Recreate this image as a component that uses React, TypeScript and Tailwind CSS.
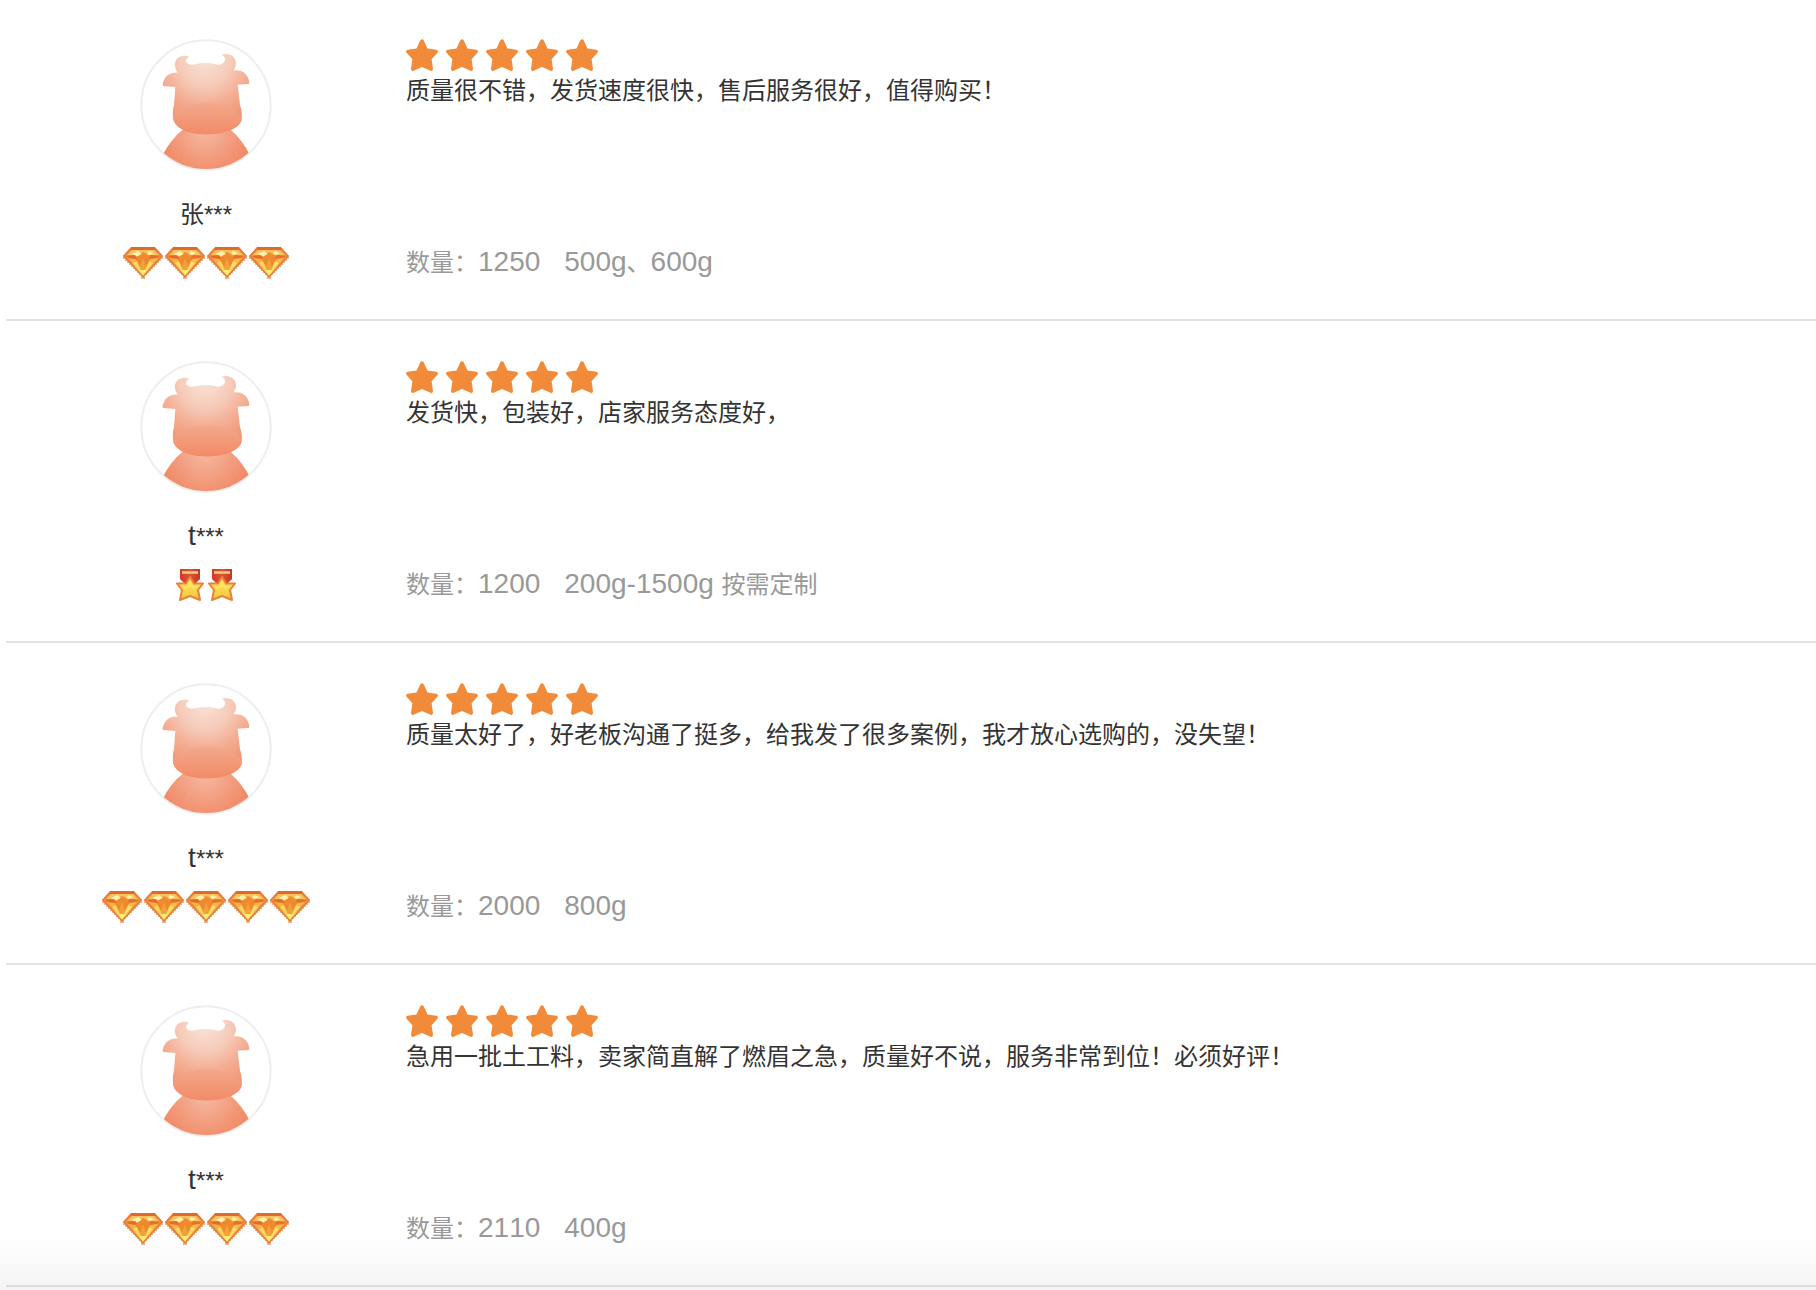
import { Fragment } from "react"

type Badge = "diamond" | "medal"

interface Review {
  name: string
  badge: Badge
  level: number
  content: string
  count: string
  spec: string
}

const reviews: Review[] = [
  {
    name: "张***",
    badge: "diamond",
    level: 4,
    content: "质量很不错，发货速度很快，售后服务很好，值得购买！",
    count: "1250",
    spec: "500g、600g",
  },
  {
    name: "t***",
    badge: "medal",
    level: 2,
    content: "发货快，包装好，店家服务态度好，",
    count: "1200",
    spec: "200g-1500g 按需定制",
  },
  {
    name: "t***",
    badge: "diamond",
    level: 5,
    content: "质量太好了，好老板沟通了挺多，给我发了很多案例，我才放心选购的，没失望！",
    count: "2000",
    spec: "800g",
  },
  {
    name: "t***",
    badge: "diamond",
    level: 4,
    content: "急用一批土工料，卖家简直解了燃眉之急，质量好不说，服务非常到位！必须好评！",
    count: "2110",
    spec: "400g",
  },
]

const Defs = () => (
  <svg className="absolute h-0 w-0" aria-hidden="true">
    <defs>
      <radialGradient id="head" gradientUnits="userSpaceOnUse" cx="225" cy="90" r="220">
        <stop offset="0" stopColor="#f9e2d8" />
        <stop offset="0.35" stopColor="#f6cbb9" />
        <stop offset="0.6" stopColor="#f4ae94" />
        <stop offset="1" stopColor="#f18a66" />
      </radialGradient>
      <linearGradient id="muzzle" x1="0" y1="0" x2="0" y2="1">
        <stop offset="0" stopColor="#f2a88b" />
        <stop offset="1" stopColor="#f28b67" />
      </linearGradient>
      <radialGradient id="body" gradientUnits="userSpaceOnUse" cx="225" cy="300" r="140">
        <stop offset="0" stopColor="#f5b9a2" />
        <stop offset="1" stopColor="#f18a66" />
      </radialGradient>
      <clipPath id="round">
        <circle cx="228" cy="225" r="192" />
      </clipPath>
      <linearGradient id="gem" x1="0" y1="0" x2="0" y2="1">
        <stop offset="0" stopColor="#ee8b32" />
        <stop offset="0.5" stopColor="#f2a03a" />
        <stop offset="1" stopColor="#fbe06a" />
      </linearGradient>
      <linearGradient id="ribbon" x1="0" y1="0" x2="1" y2="0">
        <stop offset="0" stopColor="#cb3a2c" />
        <stop offset="0.5" stopColor="#df5434" />
        <stop offset="1" stopColor="#c5352a" />
      </linearGradient>
      <linearGradient id="gold" x1="0" y1="0" x2="0" y2="1">
        <stop offset="0" stopColor="#fbe55a" />
        <stop offset="1" stopColor="#f8c842" />
      </linearGradient>
    </defs>
  </svg>
)

const Avatar = () => (
  <svg viewBox="30 27 396 396" className="h-[132px] w-[132px]" role="img" aria-label="avatar">
    <circle cx="228" cy="225" r="194" fill="#fff" stroke="#eee" strokeWidth="6" />
    <g clipPath="url(#round)">
      <path d="M158 299C132 320 112 346 98 376V425H360V376C346 346 326 320 302 299Z" fill="url(#body)" />
      <path d="M168 352Q156 370 148 398M303 352Q312 370 318 394" fill="none" stroke="#ee8866" strokeWidth="2" opacity="0.6" />
    </g>
    <path
      d="M143 128C127 105 135 82 158 78Q172 76 178 81C165 85 163 102 184 104C198 104 203 99 228 99C253 99 257 105 270 104C287 99 292 82 275 75C296 66 318 79 318 101Q318 112 311 121C338 118 355 133 358 158Q358 162 354 162L323 164L330 225Q337 242 335 267C333 294 282 313 230 313C176 313 132 294 129 264Q127 240 132 225L136 171L101 168Q97 168 98 163C103 138 120 126 143 128Z"
      fill="url(#head)"
    />
    <path
      d="M129 258C139 234 179 220 230 220C281 220 321 234 335 264C333 296 282 313 230 313C176 313 131 296 129 258Z"
      fill="url(#muzzle)"
    />
  </svg>
)

const Star = () => (
  <svg viewBox="0 0 32 32" className="h-8 w-8" aria-hidden="true">
    <path
      d="M14.300 1.300Q16 -1 17.700 1.300L21.500 9.400L30.200 10.700Q33 11.400 31.400 13.700L25.600 20.200L27 29.800Q27 32.500 24.500 31.700L16 28L7.500 31.700Q5 32.500 5 29.800L6.400 20.200L0.600 13.700Q-1 11.400 1.800 10.700L10.500 9.400Z"
      fill="#f18b39"
    />
  </svg>
)

const Diamond = () => (
  <svg viewBox="0 0 40 32" className="h-8 w-10" aria-hidden="true">
    <path d="M8 0H32V2H34V4H36V6H38V8H40V12H38V14H36V16H34V18H32V20H30V22H28V24H26V26H24V28H22V32H18V28H16V26H14V24H12V22H10V20H8V18H6V16H4V14H2V12H0V8H2V6H4V4H6V2H8Z" fill="#efb48c" />
    <path d="M8 1H32L39 9L20 30L1 9Z" fill="url(#gem)" stroke="#e3793c" strokeWidth="1.4" />
    <path d="M8 0H32V3H8Z" fill="#df6a2c" />
    <path d="M9 3H31L36 8H27L20 5L13 8H4Z" fill="#f8cb6c" opacity="0.85" />
    <path d="M15 4L19 7L13 10L9 7Z" fill="#fdf2ad" />
    <path d="M26 4L31 6L27 8L24 7Z" fill="#fff3a9" />
    <path d="M3 9L12 8L16 12L15 17Z" fill="#e65f23" opacity="0.85" />
    <path d="M37 9L28 8L24 12L25 17Z" fill="#e8672a" opacity="0.85" />
    <path d="M5 11L13 12L19 25Z" fill="#f5b246" />
    <path d="M35 11L27 12L21 25Z" fill="#f7bd49" />
    <path d="M20 6L27 11L23 20H17L13 11Z" fill="#ee8a2d" />
    <path d="M20 11L23 20L20 27L17 20Z" fill="#f0a13a" />
    <path d="M14 14L18 25L10 16Z" fill="#fce06b" opacity="0.8" />
    <path d="M26 14L22 25L30 16Z" fill="#ffe676" opacity="0.8" />
    <path d="M16 23H24L20 28Z" fill="#ffed75" />
  </svg>
)

const Medal = () => (
  <svg viewBox="0 0 28 32" className="h-8 w-7" aria-hidden="true">
    <path d="M4 0H24V10L20 14H8L4 10Z" fill="url(#ribbon)" />
    <path d="M6 2H22V5H6Z" fill="#f3ac5c" />
    <path d="M6 3H22V4H6Z" fill="#f9cf79" />
    <path
      d="M14 8L18 14.500H27L22 21L24 31L14 27L4 31L6 21L1 14.500H10Z"
      fill="url(#gold)"
      stroke="#e98235"
      strokeWidth="2"
      strokeLinejoin="round"
    />
    <path d="M14 11L16 17H22L18 20L14 18L8 21L7 17H12Z" fill="#fdea62" opacity="0.7" />
  </svg>
)

// latin runs are set larger so the digits sit level with the chinese glyphs
const Mixed = ({ text }: { text: string }) => (
  <>
    {text.split(/([0-9a-z -]+|\*+)/).map((part, i) =>
      i % 2 === 1 ? (
        <span
          key={i}
          className={
            part.startsWith("*")
              ? "font-['Liberation_Sans_Narrow','Liberation_Sans',sans-serif] text-2xl"
              : "font-['Liberation_Sans',sans-serif] text-[28px] [font-kerning:none]"
          }
        >
          {part}
        </span>
      ) : (
        <Fragment key={i}>{part}</Fragment>
      )
    )}
  </>
)

const ReviewItem = ({ review }: { review: Review }) => {
  return (
    <li className="flex border-b-2 border-[#e3e3e3] py-10">
      <div className="flex w-[400px] shrink-0 flex-col items-center">
        <Avatar />
        <p className="mt-[22px] h-10 leading-10">
          <Mixed text={review.name} />
        </p>
        <div className={review.badge === "medal" ? "mt-[14px] flex gap-1" : "mt-[14px] flex gap-[2px]"}>
          {Array.from({ length: review.level }, (_, i) =>
            review.badge === "medal" ? <Medal key={i} /> : <Diamond key={i} />
          )}
        </div>
      </div>
      <div className="flex min-w-0 flex-1 flex-col">
        <div className="flex gap-2">
          {Array.from({ length: 5 }, (_, i) => (
            <Star key={i} />
          ))}
        </div>
        <p className="leading-9">{review.content}</p>
        <p className="mt-auto h-9 leading-9 text-[#999]">
          数量：
          <Mixed text={review.count} />
          {"\u3000"}
          <Mixed text={review.spec} />
        </p>
      </div>
    </li>
  )
}

const App = () => {
  return (
    <main
      lang="zh-CN"
      className="relative min-h-screen overflow-hidden bg-white font-['Noto_Sans_CJK_SC',sans-serif] text-2xl text-[#333]"
    >
      <Defs />
      <ul className="-mt-px pl-[6px]">
        {reviews.map((review, index) => (
          <ReviewItem key={index} review={review} />
        ))}
      </ul>
      <div className="pointer-events-none absolute inset-x-0 bottom-0 h-14 bg-linear-to-b from-transparent to-black/4" />
    </main>
  )
}

export default App
